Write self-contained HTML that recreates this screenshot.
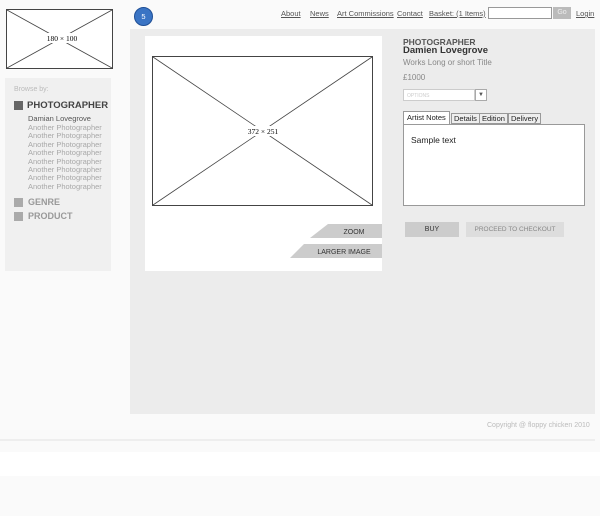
<!DOCTYPE html>
<html><head><meta charset="utf-8"><style>
*{margin:0;padding:0;box-sizing:border-box}
body{width:600px;height:516px;background:#fafafa;position:relative;overflow:hidden;font-family:"Liberation Sans",Arial,sans-serif}
.a{position:absolute}
.nav{top:9px;font-size:7.5px;color:#555;text-decoration:underline}
.ph{font-size:7.5px;color:#a8a8a8;left:28px}
</style></head><body>
<svg class="a" style="left:6px;top:9px" width="108" height="61"><rect x="0.5" y="0.5" width="106" height="59" fill="#fff" stroke="#444"/><line x1="1" y1="1" x2="106" y2="59" stroke="#444" stroke-width=".8"/><line x1="106" y1="1" x2="1" y2="59" stroke="#444" stroke-width=".8"/><rect x="40" y="24" width="32" height="10" fill="#fff"/><text x="56" y="32" font-size="7.5" text-anchor="middle" font-family="Liberation Serif">180 × 100</text></svg>
<div class="a" style="left:5px;top:78px;width:106px;height:193px;background:#f0f0f0"></div>
<div class="a" style="left:14px;top:86px;font-size:7px;color:#bbb">Browse by:</div>
<div class="a" style="left:14px;top:101px;width:9px;height:9px;background:#666"></div>
<div class="a" style="left:27px;top:100px;font-size:9.5px;font-weight:bold;color:#444">PHOTOGRAPHER</div>
<div class="a" style="left:28px;top:114px;font-size:7.5px;color:#555">Damian Lovegrove</div>
<div class="a ph" style="top:123px">Another Photographer</div>
<div class="a ph" style="top:131px">Another Photographer</div>
<div class="a ph" style="top:140px">Another Photographer</div>
<div class="a ph" style="top:148px">Another Photographer</div>
<div class="a ph" style="top:157px">Another Photographer</div>
<div class="a ph" style="top:165px">Another Photographer</div>
<div class="a ph" style="top:173px">Another Photographer</div>
<div class="a ph" style="top:182px">Another Photographer</div>
<div class="a" style="left:14px;top:198px;width:9px;height:9px;background:#aaa"></div>
<div class="a" style="left:28px;top:197px;font-size:9px;font-weight:bold;color:#999">GENRE</div>
<div class="a" style="left:14px;top:212px;width:9px;height:9px;background:#aaa"></div>
<div class="a" style="left:28px;top:211px;font-size:9px;font-weight:bold;color:#999">PRODUCT</div>
<div class="a" style="left:134px;top:7px;width:19px;height:19px;border-radius:50%;background:#3a74c4;border:1px solid #1f4f96;color:#fff;font-size:7.5px;text-align:center;line-height:17px">5</div>
<div class="a nav" style="left:281px">About</div>
<div class="a nav" style="left:310px">News</div>
<div class="a nav" style="left:337px">Art Commissions</div>
<div class="a nav" style="left:397px">Contact</div>
<div class="a nav" style="left:429px">Basket: (1 Items)</div>
<div class="a" style="left:488px;top:7px;width:64px;height:12px;background:#fff;border:1px solid #999"></div>
<div class="a" style="left:553px;top:7px;width:18px;height:12px;background:#bbb;color:#eee;font-size:7px;text-align:center;line-height:12px">Go</div>
<div class="a nav" style="left:576px">Login</div>
<div class="a" style="left:130px;top:29px;width:465px;height:385px;background:#ececec"></div>
<div class="a" style="left:145px;top:36px;width:237px;height:235px;background:#fff"></div>
<svg class="a" style="left:152px;top:56px" width="222" height="151"><rect x="0.5" y="0.5" width="220" height="149" fill="#fff" stroke="#444"/><line x1="1" y1="1" x2="220" y2="149" stroke="#444" stroke-width=".8"/><line x1="220" y1="1" x2="1" y2="149" stroke="#444" stroke-width=".8"/><rect x="94" y="70" width="34" height="10" fill="#fff"/><text x="111" y="78" font-size="7.5" text-anchor="middle" font-family="Liberation Serif">372 × 251</text></svg>
<svg class="a" style="left:290px;top:224px" width="92" height="35"><polygon points="38,0 92,0 92,14 20,14" fill="#ccc"/><polygon points="14,20 92,20 92,34 0,34" fill="#ccc"/><text x="64" y="10" font-size="7" text-anchor="middle" fill="#333" font-family="Liberation Sans">ZOOM</text><text x="54" y="30" font-size="7" text-anchor="middle" fill="#333" font-family="Liberation Sans">LARGER IMAGE</text></svg>
<div class="a" style="left:403px;top:37px;font-size:8.5px;font-weight:bold;color:#555">PHOTOGRAPHER</div>
<div class="a" style="left:403px;top:45px;font-size:9.5px;font-weight:bold;color:#333">Damien Lovegrove</div>
<div class="a" style="left:403px;top:58px;font-size:8px;color:#888">Works Long or short Title</div>
<div class="a" style="left:403px;top:73px;font-size:8px;color:#888">£1000</div>
<div class="a" style="left:403px;top:89px;width:72px;height:12px;background:#fff;border:1px solid #ccc;font-size:5px;color:#ccc;padding:3px 3px">OPTIONS</div>
<div class="a" style="left:475px;top:89px;width:12px;height:12px;background:#fff;border:1px solid #aaa;font-size:6px;color:#555;text-align:center;line-height:10px">▼</div>
<div class="a" style="left:403px;top:111px;height:14px;font-size:7.5px;color:#222;background:#fff;border:1px solid #999;border-bottom:none;padding:1px 3px">Artist Notes</div>
<div class="a" style="left:451px;top:113px;height:11px;font-size:7.5px;color:#222;background:#eee;border:1px solid #999;padding:0 2px">Details</div>
<div class="a" style="left:479px;top:113px;height:11px;font-size:7.5px;color:#222;background:#eee;border:1px solid #999;padding:0 2px">Edition</div>
<div class="a" style="left:508px;top:113px;height:11px;font-size:7.5px;color:#222;background:#eee;border:1px solid #999;padding:0 2px">Delivery</div>
<div class="a" style="left:403px;top:124px;width:182px;height:82px;background:#fff;border:1px solid #999"></div>
<div class="a" style="left:411px;top:135px;font-size:8.5px;color:#222">Sample text</div>
<div class="a" style="left:405px;top:222px;width:54px;height:15px;background:#ccc;font-size:7px;color:#333;text-align:center;line-height:15px">BUY</div>
<div class="a" style="left:466px;top:222px;width:98px;height:15px;background:#ddd;font-size:6.5px;color:#888;text-align:center;line-height:15px">PROCEED TO CHECKOUT</div>
<div class="a" style="left:487px;top:422px;font-size:7px;color:#bbb">Copyright @ floppy chicken 2010</div>
<div class="a" style="left:0;top:439px;width:595px;height:2px;background:#eee"></div>
<div class="a" style="left:0;top:452px;width:600px;height:24px;background:#fff"></div>
</body></html>
